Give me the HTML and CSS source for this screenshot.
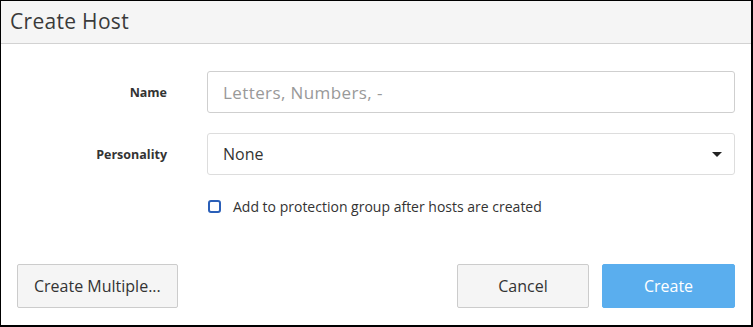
FILE: index.html
```html
<!DOCTYPE html>
<html lang="en">
<head>
    <meta charset="UTF-8">
    <title>Create Host</title>
    <link rel="stylesheet" href="styles.css">
</head>
<body>
    <div class="dialog">
        <div class="dialog-header">
            <h1>Create Host</h1>
        </div>

        <form class="dialog-body">
            <div class="form-row">
                <label for="hostName">Name</label>
                <input type="text" id="hostName" placeholder="Letters, Numbers, -">
            </div>

            <div class="form-row">
                <label for="personality">Personality</label>
                <div class="select">
                    <span>None</span>
                    <svg class="caret" width="10" height="5" viewBox="0 0 10 5"><path d="M0 0h10L5 5z" fill="#222"/></svg>
                </div>
            </div>

            <div class="form-row">
                <span></span>
                <label class="check">
                    <span class="box"></span>
                    Add to protection group after hosts are created
                </label>
            </div>
        </form>

        <div class="dialog-footer">
            <button type="button" class="btn">Create Multiple...</button>
            <div class="actions">
                <button type="button" class="btn cancel">Cancel</button>
                <button type="button" class="btn primary">Create</button>
            </div>
        </div>
    </div>
</body>
</html>
```

FILE: styles.css
```css
* {
    margin: 0;
    padding: 0;
    box-sizing: border-box;
}

body {
    font-family: 'Open Sans', 'Liberation Sans', sans-serif;
    color: #333;
    background: white;
}

.dialog {
    width: 753px;
    height: 327px;
    border-style: solid;
    border-color: #000;
    border-width: 1px 2px 2px 1px;
    background: white;
}

.dialog-header {
    height: 43px;
    background: #f5f5f5;
    border-bottom: 1px solid #d2d2d2;
    padding: 5px 9px;
}

.dialog-header h1 {
    font-size: 21px;
    font-weight: 400;
    color: #3a3a3a;
    line-height: 30px;
    letter-spacing: 0.3px;
}

.dialog-body {
    padding: 27px 16px 0 0;
    display: grid;
    gap: 20px;
}

.form-row {
    display: grid;
    grid-template-columns: 166px 1fr;
    column-gap: 40px;
    align-items: center;
}

.form-row > label {
    text-align: right;
    font-size: 12.5px;
    font-weight: 700;
    color: #333;
}

.form-row input[type="text"],
.select {
    height: 42px;
    border: 1px solid #cfcfcf;
    border-radius: 3px;
    padding: 0 15px;
    font-family: inherit;
    font-size: 16px;
    color: #333;
}

.form-row input[type="text"] {
    font-size: 17px;
    letter-spacing: 0.4px;
}

.form-row input::placeholder {
    color: #999;
}

.select {
    display: flex;
    align-items: center;
    justify-content: space-between;
    padding-right: 12px;
    border-color: #ddd;
}

.form-row > label.check {
    display: flex;
    align-items: center;
    gap: 12px;
    font-size: 14px;
    font-weight: 400;
    color: #333;
    margin-top: 2px;
}

.box {
    width: 13px;
    height: 13px;
    border: 2px solid #2a5fb8;
    border-radius: 3px;
    margin-left: 1px;
}

.dialog-footer {
    display: flex;
    justify-content: space-between;
    padding: 0 16px;
    margin-top: 48px;
}

.actions {
    display: flex;
    gap: 13px;
}

.btn {
    height: 44px;
    padding: 0 16px;
    background: #f5f5f5;
    border: 1px solid #ccc;
    border-radius: 2px;
    font-family: inherit;
    font-size: 16px;
    color: #333;
    cursor: pointer;
}

.btn.cancel {
    width: 132px;
}

.btn.primary {
    width: 133px;
    background: #5aaeee;
    border-color: #5aaeee;
    color: white;
}
```
